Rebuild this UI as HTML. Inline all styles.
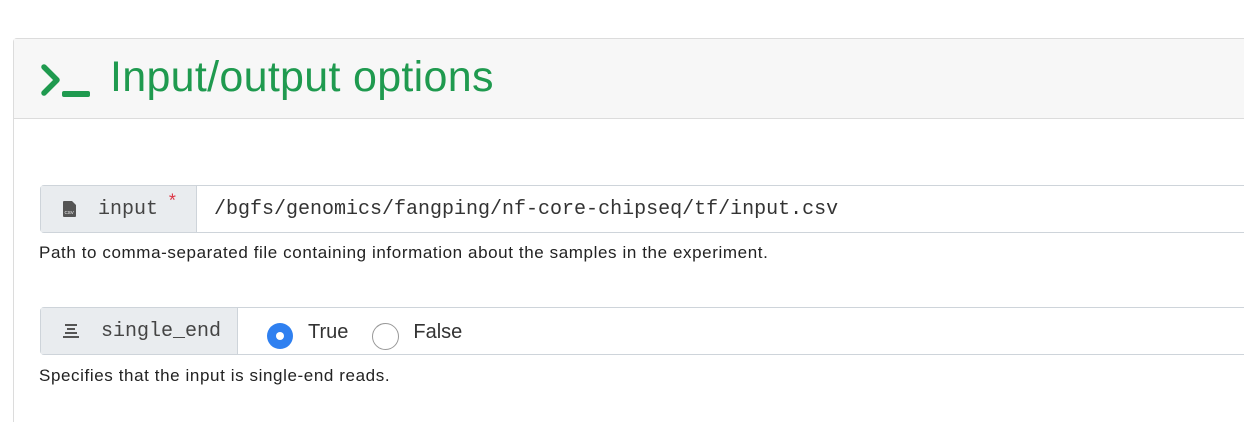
<!DOCTYPE html>
<html style="overflow:hidden;height:422px"><head><style>
body{margin:0;width:1244px;height:422px;background:#fff;overflow:hidden;font-family:"Liberation Sans",sans-serif;color:#212529;position:relative}
.card{position:absolute;left:13px;top:38px;width:1260px;height:383px;border:1px solid #dcdcdc;border-bottom:none;border-radius:4px 4px 0 0}
.hdr{height:79px;background:#f7f7f7;border-bottom:1px solid #dcdcdc;position:relative}
.hdr h2{position:absolute;left:96px;top:14px;margin:0;font-weight:normal;font-size:43px;color:#1f9a4f;letter-spacing:0.3px}
.grp{position:absolute;left:40px;height:46px;width:1240px;border:1px solid #ced4da;border-radius:4px;display:flex}
.lab{background:#e9ecef;border-right:1px solid #ced4da;display:flex;align-items:center;font-family:"Liberation Mono",monospace;font-size:20px;color:#444}
.help{position:absolute;left:39px;font-size:17px;letter-spacing:0.6px;color:#222}
.mono{font-family:"Liberation Mono",monospace;font-size:20px;color:#333}
</style></head><body>
<div class="card"><div class="hdr">
<svg style="position:absolute;left:24px;top:22px" width="56" height="40"><path d="M6 6 L19 19 L6 32" stroke="#1f9a4f" stroke-width="5.5" fill="none" stroke-linecap="round" stroke-linejoin="round"/><rect x="24" y="30" width="28" height="6" rx="2" fill="#1f9a4f"/></svg>
<h2>Input/output options</h2></div></div>
<div class="grp" style="top:185px">
<div class="lab" style="width:155px"><svg style="margin:0 22px 0 22px" width="13" height="16"><path d="M0 1 Q0 0 1 0 L9 0 L13 4 L13 15 Q13 16 12 16 L1 16 Q0 16 0 15Z" fill="#555"/><text x="1.5" y="13" font-size="4.5" fill="#fff" font-family="Liberation Sans">CSV</text></svg>input<span style="color:#dc3545;font-size:18px;margin-left:9px;position:relative;top:-6px">*</span></div>
<div class="mono" style="display:flex;align-items:center;padding-left:17px">/bgfs/genomics/fangping/nf-core-chipseq/tf/input.csv</div>
</div>
<div class="help" style="top:243px">Path to comma-separated file containing information about the samples in the experiment.</div>
<div class="grp" style="top:307px">
<div class="lab" style="width:196px"><svg style="margin:0 22px 0 22px" width="16" height="14"><rect x="2" y="0" width="12" height="2" fill="#555"/><rect x="4" y="4" width="8" height="2" fill="#555"/><rect x="2" y="8" width="12" height="2" fill="#555"/><rect x="0" y="12" width="16" height="2" fill="#555"/></svg>single_end</div>
<div style="display:flex;align-items:center;padding-left:29px;padding-top:10px;font-size:20px;color:#333">
<span style="width:26px;height:26px;border-radius:50%;background:#2f80f0;display:inline-flex;align-items:center;justify-content:center"><span style="width:8px;height:8px;background:#fff;border-radius:50%"></span></span>
<span style="margin:0 24px 0 15px;position:relative;top:-4px">True</span>
<span style="width:27px;height:27px;border-radius:50%;border:1px solid #999;display:inline-block;box-sizing:border-box"></span>
<span style="margin-left:14px;position:relative;top:-4px">False</span></div>
</div>
<div class="help" style="top:366px">Specifies that the input is single-end reads.</div>
</body></html>
